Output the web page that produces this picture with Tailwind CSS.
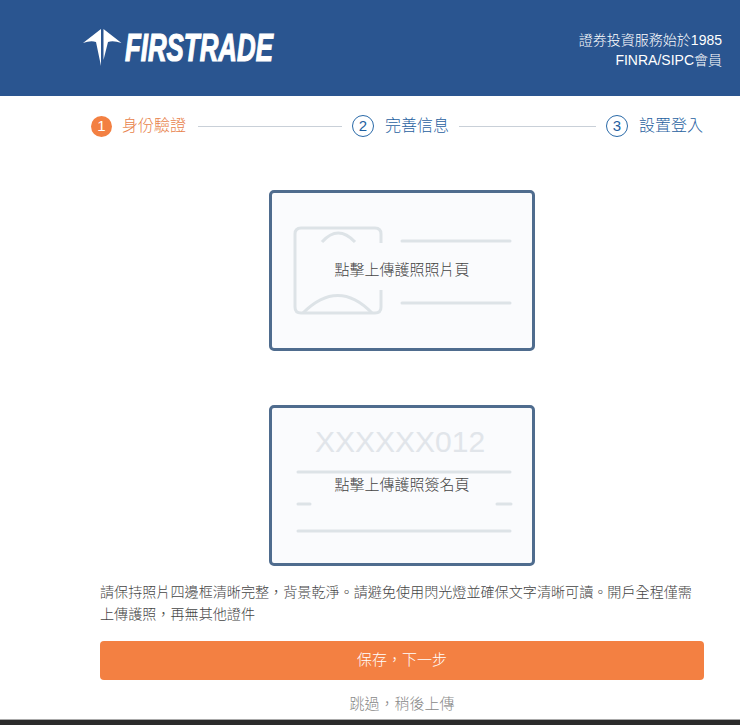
<!DOCTYPE html>
<html lang="zh-Hant">
<head>
<meta charset="utf-8">
<title>Firstrade</title>
<script src="https://cdn.jsdelivr.net/npm/@tailwindcss/browser@4"></script>
</head>
<body class="bg-white font-['Liberation_Sans','Noto_Sans_CJK_SC',sans-serif] font-light w-[740px] h-[725px] overflow-hidden flex flex-col">
<header class="h-[96px] shrink-0 bg-[#2a5590] flex items-start justify-between pl-[83px] pr-[18px]">
  <div class="flex items-center h-[37px] mt-[29px] gap-[3px]">
    <svg width="39" height="37" viewBox="0 0 39 37" fill="#fff">
      <path d="M18 0 L0 14 Q8 11 13 13 L18 37 Z"/>
      <path d="M20.500 0 L38.500 14 Q30 11 25 13 L20.500 31 Z"/>
    </svg>
    <span class="text-white italic font-bold text-[38px] leading-none [-webkit-text-stroke:1.200px_white] inline-block origin-left scale-x-[0.68] whitespace-nowrap w-[150px]">FIRSTRADE</span>
  </div>
  <div class="text-white text-right text-[14px] leading-[20px] mt-[30px]">
    <p>證券投資服務始於1985</p>
    <p>FINRA/SIPC會員</p>
  </div>
</header>

<nav class="h-[60px] shrink-0 flex items-center pl-[91px] text-[16px] text-[#1f5f9f]">
  <span class="w-[21px] h-[21px] rounded-full bg-[#f38042] text-white text-[15px] flex items-center justify-center">1</span>
  <span class="ml-[10px] text-[#e8824a]">身份驗證</span>
  <span class="ml-[12px] w-[144px] h-px bg-[#c9d0d8]"></span>
  <span class="ml-[10px] w-[22px] h-[22px] rounded-full border border-[#2a6aa8] text-[15px] flex items-center justify-center">2</span>
  <span class="ml-[11px]">完善信息</span>
  <span class="ml-[10px] w-[137px] h-px bg-[#c9d0d8]"></span>
  <span class="ml-[10px] w-[22px] h-[22px] rounded-full border border-[#2a6aa8] text-[15px] flex items-center justify-center">3</span>
  <span class="ml-[11px]">設置登入</span>
</nav>

<main class="flex-1 flex flex-col">
  <div class="relative mt-[34px] ml-[269px] w-[266px] h-[161px] border-[3px] border-[#4f6c8e] rounded-[5px] bg-[#fafbfd] flex items-center justify-center pb-[1px]">
    <svg class="absolute inset-0" width="260" height="155" viewBox="0 0 260 155" fill="none" stroke="#dde3e7" stroke-width="3">
      <path d="M109 50 V41 Q109 35 103 35 H29 Q23 35 23 41 V114 Q23 120 29 120 H103 Q109 120 109 114 V97"/>
      <path d="M50 49 Q66 31 83 49"/>
      <path d="M31 120 Q66 85 100 120"/>
      <path d="M130 48 H238 M130 110 H238" stroke-linecap="round"/>
    </svg>
    <span class="relative text-[15px] text-[#444]">點擊上傳護照照片頁</span>
  </div>

  <div class="relative mt-[54px] ml-[269px] w-[266px] h-[161px] border-[3px] border-[#4f6c8e] rounded-[5px] bg-[#fafbfd] flex items-center justify-center pb-[1px]">
    <svg class="absolute inset-0" width="260" height="155" viewBox="0 0 260 155" fill="none" stroke="#dde3e7" stroke-width="3">
      <path d="M26 64 H238 M26 96 H38 M225 96 H239 M26 123 H238" stroke-linecap="round"/>
    </svg>
    <span class="absolute left-[43px] top-[16px] text-[#e1e5ea] text-[30px] leading-[36px]">XXXXXX012</span>
    <span class="relative text-[15px] text-[#444]">點擊上傳護照簽名頁</span>
  </div>

  <p class="mt-[15px] ml-[100px] w-[604px] text-[14.100px] leading-[22px] text-[#444]">請保持照片四邊框清晰完整，背景乾淨。請避免使用閃光燈並確保文字清晰可讀。開戶全程僅需上傳護照，再無其他證件</p>

  <button class="mt-[16px] ml-[100px] w-[604px] h-[39px] shrink-0 rounded-[4px] bg-[#f38042] text-white text-[15px]">保存，下一步</button>

  <a class="mt-[12px] h-[24px] shrink-0 ml-[100px] w-[604px] text-center text-[15px] leading-[24px] text-[#888]">跳過，稍後上傳</a>
</main>

<footer class="h-[6px] shrink-0 bg-[#2b2b2b] border-t border-[#aaa]"></footer>
</body>
</html>
